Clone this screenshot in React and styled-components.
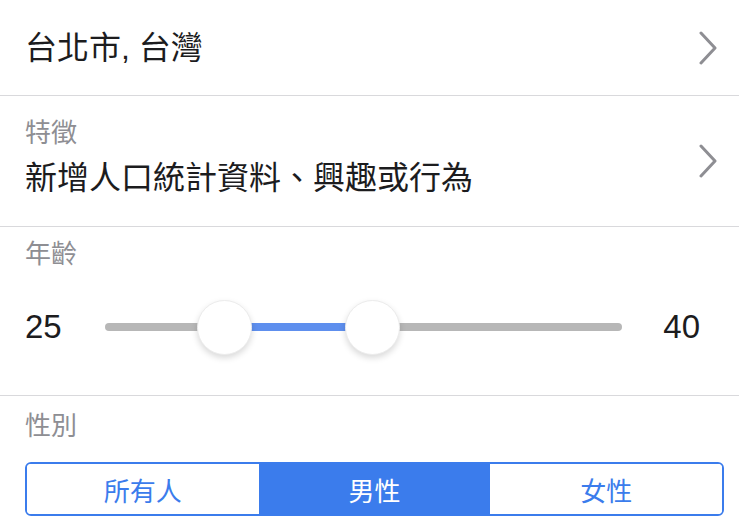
import React from 'react';
import styled, { createGlobalStyle } from 'styled-components';

const GlobalStyle = createGlobalStyle`
  body {
    margin: 0;
    background: #ffffff;
    font-family: "Liberation Sans", "Noto Sans CJK TC", sans-serif;
    color: #1c1c1e;
  }
`;

const Page = styled.div`
  width: 739px;
  height: 526px;
  overflow: hidden;
  background: #ffffff;
`;

const Section = styled.div`
  display: flex;
  flex-direction: column;
  height: ${p => p.h}px;
  padding: ${p => p.pad || '0 25px'};
  border-bottom: ${p => (p.last ? 'none' : '1px solid #d9d9dc')};
  box-sizing: border-box;
`;

const LinkRow = styled.div`
  display: flex;
  align-items: center;
  justify-content: space-between;
  flex: 1;
`;

const Stack = styled.div`
  display: flex;
  flex-direction: column;
  align-self: flex-start;
  padding-top: ${p => p.top || 0}px;
`;

const MainText = styled.div`
  font-size: 32px;
  line-height: ${p => p.lh || 44}px;
  color: #1c1c1e;
`;

const Label = styled.div`
  font-size: 26px;
  line-height: ${p => p.lh || 36}px;
  color: #8e8e93;
`;

const Chevron = styled.svg`
  width: 20px;
  height: 34px;
  margin-right: -4px;
  flex-shrink: 0;
`;

const SliderRow = styled.div`
  display: flex;
  align-items: center;
  height: 56px;
  margin: 27px 14px 0 0;
`;

const Value = styled.div`
  font-size: 33px;
  width: 37px;
  text-align: ${p => p.align};
  color: #1c1c1e;
`;

const Track = styled.div`
  position: relative;
  flex: 1;
  height: 8px;
  border-radius: 4px;
  background: #b7b7b7;
  margin: 0 41px 0 43px;
`;

const Fill = styled.div`
  position: absolute;
  top: 0;
  height: 8px;
  background: #5e8fee;
`;

const Thumb = styled.div`
  position: absolute;
  top: 50%;
  width: 55px;
  height: 55px;
  margin: -27px 0 0 -27px;
  border-radius: 50%;
  background: #ffffff;
  border: 1px solid #ececec;
  box-sizing: border-box;
  box-shadow: 0 3px 6px rgba(0, 0, 0, 0.15);
`;

const Segmented = styled.div`
  display: grid;
  grid-template-columns: 1fr 1fr 1fr;
  height: 54px;
  margin-top: 18px;
  border: 2px solid #3b7cec;
  border-radius: 6px;
  overflow: hidden;
  box-sizing: border-box;
`;

const Segment = styled.div`
  display: flex;
  align-items: center;
  justify-content: center;
  font-size: 26px;
  color: ${p => (p.active ? '#ffffff' : '#3b7cec')};
  background: ${p => (p.active ? '#3b7cec' : '#ffffff')};
`;

const ChevronIcon = () => (
  <Chevron viewBox="0 0 20 34">
    <polyline points="3,2 17,17 3,32" fill="none" stroke="#8e8e93" strokeWidth="3" strokeLinecap="round" strokeLinejoin="round" />
  </Chevron>
);

const low = 25;
const high = 40;
// thumb positions along the track (the scale is not linear)
const lowPos = 23;
const highPos = 51.6;

export default function App() {
  return (
    <Page>
      <GlobalStyle />
      <Section h={96}>
        <LinkRow>
          <MainText>台北市, 台灣</MainText>
          <ChevronIcon />
        </LinkRow>
      </Section>
      <Section h={131}>
        <LinkRow>
          <Stack top={17}>
            <Label lh={40}>特徵</Label>
            <MainText lh={50}>新增人口統計資料、興趣或行為</MainText>
          </Stack>
          <ChevronIcon />
        </LinkRow>
      </Section>
      <Section h={169} pad="9px 25px 0">
        <Label>年齡</Label>
        <SliderRow>
          <Value align="left">{low}</Value>
          <Track>
            <Fill style={{ left: `${lowPos}%`, width: `${highPos - lowPos}%` }} />
            <Thumb style={{ left: `${lowPos}%` }} />
            <Thumb style={{ left: `${highPos}%` }} />
          </Track>
          <Value align="right">{high}</Value>
        </SliderRow>
      </Section>
      <Section h={130} pad="12px 15px 0 25px" last>
        <Label>性別</Label>
        <Segmented>
          <Segment>所有人</Segment>
          <Segment active>男性</Segment>
          <Segment>女性</Segment>
        </Segmented>
      </Section>
    </Page>
  );
}
